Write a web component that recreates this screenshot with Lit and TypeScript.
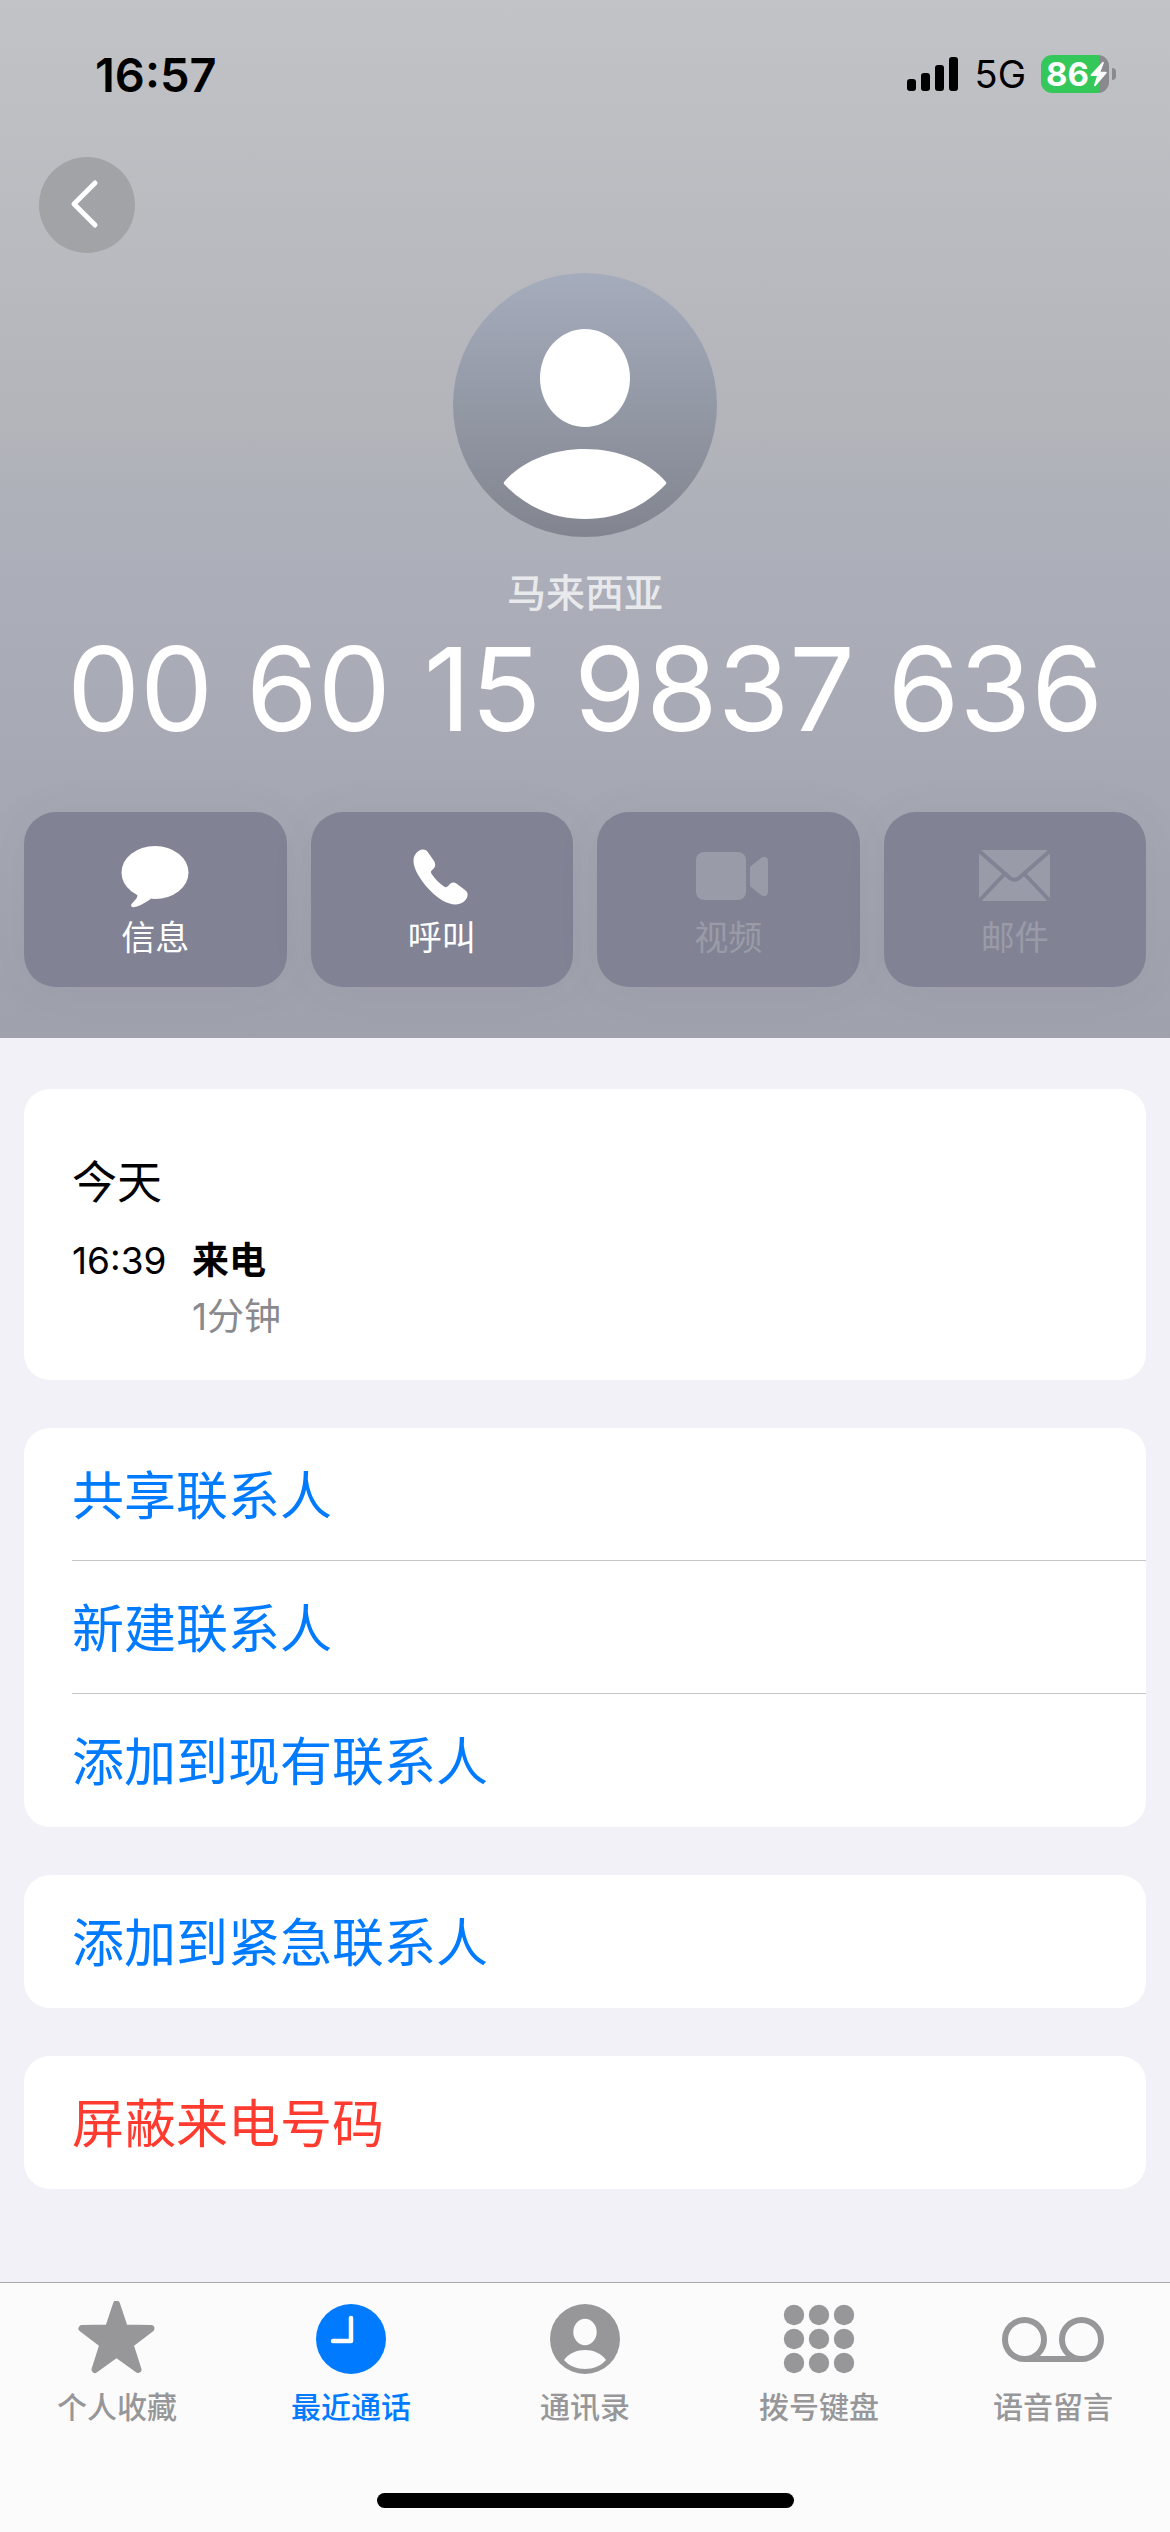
import { LitElement, html, css, svg } from "lit";
import { customElement } from "lit/decorators.js";
import { classMap } from "lit/directives/class-map.js";

const messageIcon = svg`
  <svg class="action-icon" viewBox="0 0 80 64" aria-hidden="true">
    <g transform="translate(6.5 1)" fill="currentColor">
      <ellipse cx="33.5" cy="26.5" rx="33.5" ry="26.5" />
      <path d="M12 44 L16 49 Q16 51 14.5 53 L10 58 Q8.500 61 12 61.200 Q18 61 29.500 52.800 Z" />
    </g>
  </svg>`;

const phoneIcon = svg`
  <svg class="action-icon" viewBox="0 0 80 64" aria-hidden="true">
    <path transform="translate(11.500 4.500)" fill="currentColor"
      d="M9 0 C12 0 13.500 1 15 3.500 L20.500 11.500 C22 14 22 16 21 18 L18 21.300 C17 22.500 17.300 23 18.500 25 C22 30 26 34 30.500 37 C32 38 33 38 34 37 L37 34 C39 32.500 41 32.500 43.500 34.500 L51.500 40.500 C54 42.500 54.300 44 54 46.500 C53 51 48 55 42 55 C34 55 23 49 12 36 C4 26 0 18 0 11 C0 5 5 0 9 0 Z" />
  </svg>`;

const videoIcon = svg`
  <svg class="action-icon" viewBox="0 0 80 64" aria-hidden="true">
    <g fill="currentColor">
      <rect x="8" y="7" width="50" height="48" rx="8" />
      <path d="M62 23.500 Q62 22 63 21 L73 13 Q76 10.800 78 12.200 Q80 13 80 16 V47 Q80 50 78 50.800 Q76 52 73 50 L63 42 Q62 41 62 39.500 Z" />
    </g>
  </svg>`;

const mailIcon = svg`
  <svg class="action-icon" viewBox="0 0 80 64" aria-hidden="true">
    <rect x="4" y="5" width="71" height="51" rx="4" fill="currentColor" />
    <g class="mail-fold" fill="none" stroke-width="4">
      <path d="M3 5 L35 33 Q39.500 36.500 44 33 L76 5" />
      <path d="M3 57 L29.500 29 M76 57 L49.500 29" />
    </g>
  </svg>`;

const starIcon = svg`
  <svg class="tab-icon" viewBox="0 0 104 76" aria-hidden="true">
    <polygon transform="translate(13.500 -1)" fill="currentColor" stroke="currentColor" stroke-width="7" stroke-linejoin="round"
      points="38,4 46,28 72.5,28.5 51.5,44.5 59.500,69.500 38,54 16.500,69.500 24.500,44.500 3.500,28.500 30,28" />
  </svg>`;

const clockIcon = svg`
  <svg class="tab-icon" viewBox="0 0 104 76" aria-hidden="true">
    <circle cx="52" cy="38" r="35" fill="currentColor" />
    <path class="tab-cut-line" d="M52 17 V40 H34" fill="none" stroke-width="4.500" stroke-linecap="round" stroke-linejoin="round" />
  </svg>`;

const contactIcon = svg`
  <svg class="tab-icon" viewBox="0 0 104 76" aria-hidden="true">
    <circle cx="52" cy="38" r="35" fill="currentColor" />
    <g class="tab-cut" transform="translate(17 3)">
      <ellipse cx="35" cy="28" rx="11.700" ry="13.200" />
      <path d="M14 56 C19 49 27 46 35 46 C43 46 51 49 56 56 C51 62 43 65 35 65 C27 65 19 62 14 56 Z" />
    </g>
  </svg>`;

const keypadIcon = svg`
  <svg class="tab-icon" viewBox="0 0 104 76" aria-hidden="true">
    <g fill="currentColor">
      ${[14, 38, 62].map((y) =>
        [27, 52, 77].map((x) => svg`<circle cx=${x} cy=${y} r="10.200" />`)
      )}
    </g>
  </svg>`;

const voicemailIcon = svg`
  <svg class="tab-icon" viewBox="0 0 104 76" aria-hidden="true">
    <g fill="none" stroke="currentColor" stroke-width="6">
      <circle cx="23.500" cy="38.500" r="19.500" />
      <circle cx="80.500" cy="38.500" r="19.500" />
      <path d="M23.500 58 H80.500" />
    </g>
  </svg>`;

const actions = [
  { label: "信息", icon: messageIcon, enabled: true },
  { label: "呼叫", icon: phoneIcon, enabled: true },
  { label: "视频", icon: videoIcon, enabled: false },
  { label: "邮件", icon: mailIcon, enabled: false },
];

const groups = [
  { danger: false, rows: ["共享联系人", "新建联系人", "添加到现有联系人"] },
  { danger: false, rows: ["添加到紧急联系人"] },
  { danger: true, rows: ["屏蔽来电号码"] },
];

const tabs = [
  { label: "个人收藏", icon: starIcon, active: false },
  { label: "最近通话", icon: clockIcon, active: true },
  { label: "通讯录", icon: contactIcon, active: false },
  { label: "拨号键盘", icon: keypadIcon, active: false },
  { label: "语音留言", icon: voicemailIcon, active: false },
];

@customElement("status-bar")
export class StatusBar extends LitElement {
  static styles = css`
    :host {
      display: flex;
      align-items: center;
      justify-content: space-between;
      height: 148px;
      padding: 0 54px 0 95px;
      color: #000;
    }
    .time {
      font-size: 47px;
      font-weight: 600;
    }
    .indicators {
      display: flex;
      align-items: center;
    }
    .signal {
      width: 51px;
      height: 34px;
      margin-right: 17px;
    }
    .network {
      font-size: 38px;
      margin-right: 15px;
    }
    .battery {
      display: flex;
      align-items: center;
      gap: 3px;
    }
    .cell {
      display: flex;
      align-items: center;
      gap: 1px;
      box-sizing: border-box;
      width: 68px;
      height: 38px;
      padding-left: 5px;
      border-radius: 11px;
      background: linear-gradient(to right, #34c759 86%, #8a8a8e 86%);
      color: #fff;
      font-size: 33px;
      font-weight: 700;
    }
    .bolt {
      width: 17px;
      height: 26px;
      flex: none;
    }
    .nub {
      width: 4px;
      height: 12px;
      border-radius: 0 6px 6px 0;
      background: #8a8a8e;
    }
  `;

  render() {
    return html`
      <span class="time">16:57</span>
      <div class="indicators">
        <svg class="signal" viewBox="0 0 51 34" aria-hidden="true">
          <rect x="0" y="22" width="9" height="12" rx="3" />
          <rect x="14" y="16" width="9" height="18" rx="3" />
          <rect x="28" y="8" width="9" height="26" rx="3" />
          <rect x="42" y="0" width="9" height="34" rx="3" />
        </svg>
        <span class="network">5G</span>
        <div class="battery">
          <span class="cell">
            86
            <svg class="bolt" viewBox="0 0 17 26" aria-hidden="true">
              <path fill="#fff" d="M12.500 1 L0.800 13.500 Q0 15 1.500 15 H7 L4 24 Q4 26 5.500 25 L16.500 12.200 Q17.200 10.700 15.500 10.700 H10.500 L13.800 2 Q13.800 0 12.500 1 Z" />
            </svg>
          </span>
          <span class="nub"></span>
        </div>
      </div>
    `;
  }
}

@customElement("contact-header")
export class ContactHeader extends LitElement {
  static styles = css`
    :host {
      display: block;
      padding-bottom: 51px;
      background: linear-gradient(
        #c2c3c7 0%,
        #b9babf 25%,
        #b2b4ba 42%,
        #acaeb9 54%,
        #a6a8b4 75%,
        #9fa1ad 100%
      );
    }
    .toolbar {
      display: flex;
      padding: 9px 39px 0;
    }
    .back {
      display: grid;
      place-items: center;
      width: 96px;
      height: 96px;
      padding: 0;
      border: 0;
      border-radius: 50%;
      background: #a2a3a7;
    }
    .back-icon {
      width: 96px;
      height: 96px;
    }
    .identity {
      display: flex;
      flex-direction: column;
      align-items: center;
      padding-top: 20px;
    }
    .avatar {
      width: 264px;
      height: 264px;
      margin-bottom: 28px;
    }
    .region {
      margin: 0;
      font-size: 39px;
      font-weight: 500;
      line-height: 56px;
      color: #e8e9ec;
    }
    .number {
      margin: 0;
      font-size: 116px;
      font-weight: 400;
      line-height: 136px;
      white-space: nowrap;
      color: #fff;
    }
    .actions {
      display: grid;
      grid-template-columns: repeat(4, 1fr);
      gap: 24px;
      padding: 55px 24px 0;
    }
    .action {
      display: flex;
      flex-direction: column;
      align-items: center;
      gap: 9px;
      padding: 33px 0 29px;
      border: 0;
      border-radius: 32px;
      background: #818394;
      box-shadow: 0 4px 48px rgba(70, 72, 90, 0.06);
      color: #fff;
      font: inherit;
      font-size: 34px;
      line-height: 40px;
    }
    .action:disabled {
      color: #999ba8;
    }
    .action-icon {
      width: 80px;
      height: 64px;
    }
    .mail-fold {
      stroke: #818394;
    }
  `;

  render() {
    return html`
      <status-bar></status-bar>
      <div class="toolbar">
        <button class="back" aria-label="返回">
          <svg class="back-icon" viewBox="0 0 96 96" aria-hidden="true">
            <path d="M56 26 L35 47 L56 68" fill="none" stroke="#fff" stroke-width="5" stroke-linecap="round" stroke-linejoin="round" />
          </svg>
        </button>
      </div>
      <div class="identity">
        <svg class="avatar" viewBox="0 0 264 264" aria-hidden="true">
          <defs>
            <linearGradient id="disc" x1="0" y1="0" x2="0" y2="1">
              <stop offset="0" stop-color="#a5acbc" />
              <stop offset="1" stop-color="#82858f" />
            </linearGradient>
          </defs>
          <circle cx="132" cy="132" r="132" fill="url(#disc)" />
          <ellipse cx="132" cy="105" rx="45" ry="49" fill="#fff" />
          <path fill="#fff" d="M51 209 C69 188 99 176 132 176 C165 176 195 188 213 209 Q213.500 210 213 211 C191 234 164 246 132 246 C100 246 73 234 51 211 Q50.500 210 51 209 Z" />
        </svg>
        <p class="region">马来西亚</p>
        <h1 class="number">00 60 15 9837 636</h1>
      </div>
      <div class="actions">
        ${actions.map(
          (a) => html`
            <button class="action" ?disabled=${!a.enabled}>
              ${a.icon}<span>${a.label}</span>
            </button>
          `
        )}
      </div>
    `;
  }
}

@customElement("tab-bar")
export class TabBar extends LitElement {
  static styles = css`
    :host {
      display: block;
      margin-top: auto;
      border-top: 1px solid #a9a9ad;
      background: #fbfbfc;
    }
    .tabs {
      display: grid;
      grid-template-columns: repeat(5, 1fr);
      padding-top: 18px;
    }
    .tab {
      display: flex;
      flex-direction: column;
      align-items: center;
      gap: 12px;
      color: #979799;
      font-size: 30px;
      font-weight: 500;
      line-height: 36px;
      text-decoration: none;
    }
    .active {
      color: #007aff;
    }
    .tab-icon {
      width: 104px;
      height: 76px;
    }
    .tab-cut {
      fill: #fbfbfc;
    }
    .tab-cut-line {
      stroke: #fbfbfc;
    }
    .home {
      width: 417px;
      height: 15px;
      margin: 68px auto 24px;
      border-radius: 8px;
      background: #000;
    }
  `;

  render() {
    return html`
      <nav class="tabs">
        ${tabs.map(
          (t) => html`
            <a class=${classMap({ tab: true, active: t.active })} href="#">
              ${t.icon}<span>${t.label}</span>
            </a>
          `
        )}
      </nav>
      <div class="home"></div>
    `;
  }
}

@customElement("app-root")
export class AppRoot extends LitElement {
  static styles = css`
    :host {
      display: flex;
      flex-direction: column;
      min-height: 100vh;
      background: #f2f1f7;
      font-family: Inter, "Noto Sans CJK SC", sans-serif;
    }
    .content {
      display: flex;
      flex-direction: column;
      gap: 48px;
      padding: 51px 24px 48px;
    }
    .card {
      margin: 0;
      padding: 0;
      border-radius: 26px;
      background: #fff;
      overflow: hidden;
      list-style: none;
    }
    .history {
      padding: 64px 48px 35px;
    }
    .day {
      margin: 0 0 20px;
      font-size: 45px;
      font-weight: 400;
      line-height: 60px;
      color: #000;
    }
    .call {
      display: grid;
      grid-template-columns: 96px 1fr;
      column-gap: 24px;
      font-size: 37px;
      line-height: 56px;
      color: #000;
    }
    .kind {
      font-weight: 600;
    }
    .duration {
      grid-column: 2;
      color: #8a8a8e;
    }
    .row {
      box-sizing: border-box;
      min-height: 133px;
      margin-left: 48px;
    }
    .row:not(:last-child) {
      border-bottom: 1px solid #c6c6c8;
    }
    .link {
      display: block;
      width: 100%;
      padding: 41px 0 35px;
      border: 0;
      background: none;
      color: #007aff;
      font: inherit;
      font-size: 52px;
      line-height: 56px;
      text-align: left;
    }
    .danger {
      color: #ff3b30;
    }
  `;

  render() {
    return html`
      <contact-header></contact-header>
      <main class="content">
        <section class="card history">
          <h2 class="day">今天</h2>
          <div class="call">
            <time>16:39</time>
            <span class="kind">来电</span>
            <span class="duration">1分钟</span>
          </div>
        </section>
        ${groups.map(
          (g) => html`
            <ul class="card">
              ${g.rows.map(
                (label) => html`
                  <li class="row">
                    <button class=${classMap({ link: true, danger: g.danger })}>${label}</button>
                  </li>
                `
              )}
            </ul>
          `
        )}
      </main>
      <tab-bar></tab-bar>
    `;
  }
}
